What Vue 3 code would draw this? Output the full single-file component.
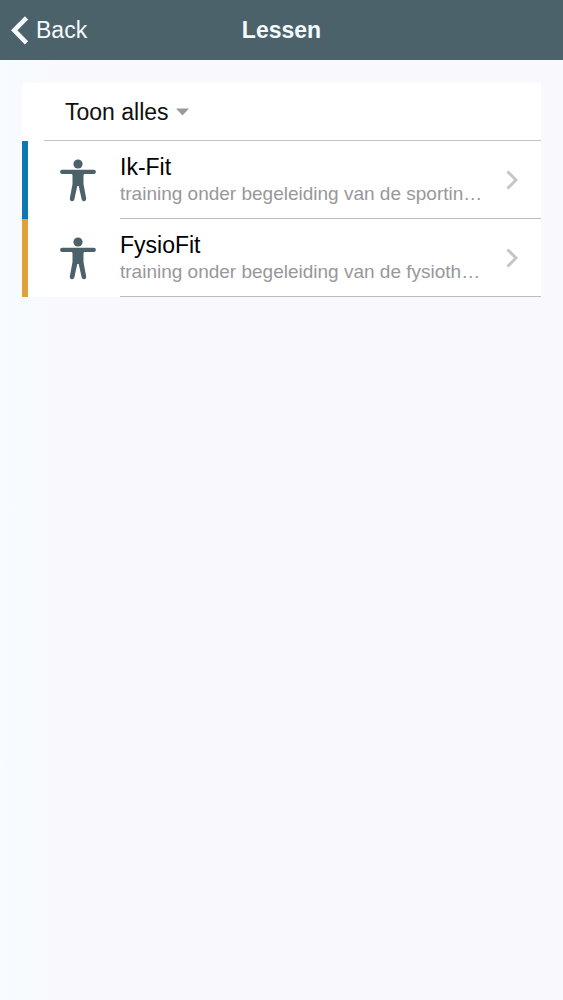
<script setup>
const lessons = [
  { name: 'Ik-Fit', color: 'blue', text: 'training onder begeleiding van de sportin…' },
  { name: 'FysioFit', color: 'amber', text: 'training onder begeleiding van de fysioth…' },
]
</script>

<template>
  <div class="screen">
    <header class="bar">
      <button class="back" type="button">
        <svg width="18" height="30" viewBox="0 0 18 30" aria-hidden="true">
          <path d="M15.500 2.800 3.200 15.300l12.300 12.500" fill="none" stroke="currentColor" stroke-width="4.600" />
        </svg>
        <span>Back</span>
      </button>
      <h1>Lessen</h1>
    </header>
    <main class="card">
      <button class="filter" type="button" aria-haspopup="listbox">
        <span>Toon alles</span>
        <svg width="13" height="8" viewBox="0 0 13 8" aria-hidden="true">
          <path d="M0 0.500h13L6.500 7.500z" fill="#9a9a9c" />
        </svg>
      </button>
      <ul class="list">
        <li v-for="lesson in lessons" :key="lesson.name">
          <a href="#" class="row" :class="lesson.color">
            <svg class="person" width="36" height="44" viewBox="0 0 36 44" aria-hidden="true">
              <circle cx="18" cy="5" r="4.600" />
              <path d="M2.200 10.800h31.600a2.100 2.100 0 0 1 0 4.200H25c-1 0-1.500 0.600-1.500 1.400V25l2.700 14.600a2.300 2.300 0 0 1-4.500 0.900L18.700 27h-1.400l-3 13.500a2.300 2.300 0 0 1-4.500-0.900L12.500 25v-8.600c0-0.800-0.500-1.400-1.500-1.400H2.200a2.100 2.100 0 0 1 0-4.200z" />
            </svg>
            <span class="body">
              <span class="copy">
                <span class="name">{{ lesson.name }}</span>
                <span class="text">{{ lesson.text }}</span>
              </span>
              <svg class="chevron" width="12" height="20" viewBox="0 0 12 20" aria-hidden="true">
                <path d="M1.500 1.500 10 10l-8.500 8.500" fill="none" stroke="#c5c5c9" stroke-width="3" />
              </svg>
            </span>
          </a>
        </li>
      </ul>
    </main>
  </div>
</template>

<style>
body {
  background: linear-gradient(90deg, #f6fcff, #f7fbfe 15px, #f9f9fd 60px);
}
</style>

<style scoped>
.screen {
  min-height: 100vh;
  font-family: "Liberation Sans", Arial, sans-serif;
  font-size: 23px;
  line-height: 28px;
  color: #101010;
}
.bar {
  display: grid;
  grid-template-columns: 1fr auto 1fr;
  align-items: center;
  height: 60px;
  background: #4b626b;
  color: #f4fafd;
}
h1 {
  margin: 0;
  font-size: 23px;
  font-weight: 700;
}
button {
  border: 0;
  background: none;
  font: inherit;
  color: inherit;
  cursor: pointer;
}
.back {
  display: flex;
  align-items: center;
  justify-self: start;
  gap: 7px;
  padding: 0 11px;
}
.card {
  margin: 23px 22px 0;
  background: #fff;
}
.filter {
  display: flex;
  align-items: center;
  gap: 7px;
  width: calc(100% - 22px);
  height: 58px;
  margin-left: 22px;
  padding: 0 21px;
  border-bottom: 1px solid #c4c4c8;
}
.list {
  margin: 0;
  padding: 0;
  list-style: none;
}
.row {
  display: flex;
  color: inherit;
  text-decoration: none;
  border-left: 6px solid;
}
.blue {
  border-left-color: #0e76b0;
}
.amber {
  border-left-color: #dfa23a;
}
.person {
  flex: none;
  margin: 18px 24px 0 32px;
  fill: #4b626b;
}
.body {
  display: flex;
  flex: 1;
  align-items: center;
  justify-content: space-between;
  min-width: 0;
  height: 77px;
  padding-right: 23px;
  border-bottom: 1px solid #bcbcc0;
}
.copy {
  display: flex;
  flex-direction: column;
  min-width: 0;
  margin-right: 18px;
}
.name {
  color: #000;
}
.text {
  overflow: hidden;
  font-size: 19px;
  line-height: 26px;
  color: #98979b;
  text-overflow: ellipsis;
  white-space: nowrap;
}
.chevron {
  flex: none;
}
</style>
